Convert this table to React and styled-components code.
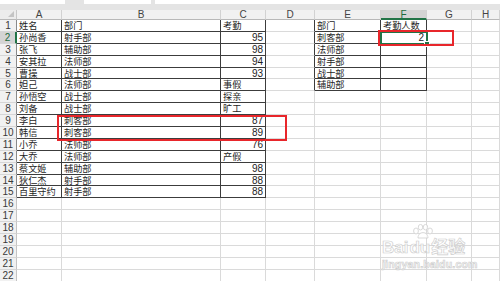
import React from 'react'
import styled, { createGlobalStyle } from 'styled-components'

const Global = createGlobalStyle`
  html, body {
    margin: 0;
    padding: 0;
    background: #fff;
    overflow: hidden;
  }
  body {
    font-family: 'Liberation Sans', 'Noto Sans CJK SC', sans-serif;
  }
`

const Page = styled.div`
  position: relative;
  width: 500px;
  height: 281px;
  overflow: hidden;
  background: #fff;
`

const TopStrip = styled.div`
  height: 10px;
  background: #e4e4e4;
  display: flex;
  align-items: flex-start;
`

const FormulaBox = styled.div`
  height: 4px;
  width: ${p => p.$w}px;
  margin-left: ${p => p.$gap}px;
  background: #fff;
  flex: ${p => (p.$grow ? 1 : 'none')};
`

const Sheet = styled.div`
  display: grid;
  grid-template-columns: 17px 45px 159px 45px 49px 66px 46px 45px 1fr;
  grid-template-rows: 10px repeat(22, 11.9px);
`

const Corner = styled.div`
  background: #ececec;
  border-right: 1px solid #c8c8c8;
  border-bottom: 1px solid #b8b8b8;
  box-sizing: border-box;
  position: relative;

  &:after {
    content: '';
    position: absolute;
    right: 2px;
    bottom: 2px;
    border-left: 6px solid transparent;
    border-bottom: 6px solid #c4c4c4;
  }
`

const ColHead = styled.div`
  box-sizing: border-box;
  background: ${p => (p.$sel ? '#d4d4d4' : '#f1f1f1')};
  border-right: 1px solid #d2d2d2;
  border-bottom: ${p => (p.$sel ? '2px solid #217346' : '1px solid #b8b8b8')};
  color: ${p => (p.$sel ? '#1d6b3c' : '#444')};
  font-size: 10px;
  line-height: 9px;
  text-align: center;
  font-family: 'Liberation Sans', sans-serif;
`

const RowHead = styled.div`
  box-sizing: border-box;
  background: ${p => (p.$sel ? '#d4d4d4' : '#f1f1f1')};
  border-right: ${p => (p.$sel ? '2px solid #217346' : `1px solid ${p.$dark ? '#8a8a8a' : '#c4c4c4'}`)};
  border-bottom: 1px solid #d6d6d6;
  color: ${p => (p.$sel ? '#1d6b3c' : '#3a3a3a')};
  font-size: 10px;
  line-height: 11px;
  text-align: center;
  font-family: 'Liberation Sans', sans-serif;
`

const Cell = styled.div`
  box-sizing: border-box;
  border-right: 1px solid ${p => (p.$darkR ? '#3c3c3c' : '#dadada')};
  border-bottom: 1px solid ${p => (p.$darkB ? '#3c3c3c' : '#dadada')};
  font-family: ${p => (p.$num ? "'Liberation Sans', sans-serif" : "'Noto Sans CJK SC', sans-serif")};
  font-size: ${p => (p.$num ? '10px' : '9.2px')};
  line-height: 11px;
  color: #1e1e1e;
  text-align: ${p => (p.$num ? 'right' : 'left')};
  padding: 0 2px 0 2px;
  white-space: nowrap;
`

const Mark = styled.div`
  position: absolute;
  left: ${p => p.$x}px;
  top: ${p => p.$y}px;
  width: ${p => p.$w}px;
  height: ${p => p.$h}px;
  border: 2px solid #e8262b;
  box-sizing: border-box;
  pointer-events: none;
`

const Active = styled.div`
  position: absolute;
  left: 380px;
  top: 31px;
  width: 48px;
  height: 14px;
  border: 2px solid #217346;
  box-sizing: border-box;

  &:after {
    content: '';
    position: absolute;
    right: -4px;
    bottom: -4px;
    width: 4px;
    height: 4px;
    background: #217346;
    border: 1px solid #fff;
  }
`

const Watermark = styled.div`
  position: absolute;
  left: 382px;
  top: 225px;
  width: 92px;
  display: flex;
  flex-direction: column;
  align-items: flex-start;
  color: rgba(255, 255, 255, 0.85);
  -webkit-text-stroke: 0.7px #cfcfcf;
  font-family: 'Liberation Sans', 'Noto Sans CJK SC', sans-serif;
`

const LogoLine = styled.div`
  display: flex;
  align-items: flex-end;
  font-weight: bold;
  font-size: 17px;
  line-height: 17px;
  margin-top: 14px;
`

const Du = styled.span`
  position: relative;
  margin: 0 1px;
`

const Paw = styled.svg`
  position: absolute;
  left: 1px;
  top: -15px;
`

const Site = styled.div`
  font-size: 10.5px;
  line-height: 12px;
  margin-top: 2px;
  font-weight: bold;
  letter-spacing: 0.2px;
`

const cols = ['A', 'B', 'C', 'D', 'E', 'F', 'G', 'H']

const people = [
  ['姓名', '部门', '考勤'],
  ['孙尚香', '射手部', 95],
  ['张飞', '辅助部', 98],
  ['安其拉', '法师部', 94],
  ['曹操', '战士部', 93],
  ['妲己', '法师部', '事假'],
  ['孙悟空', '战士部', '探亲'],
  ['刘备', '战士部', '旷工'],
  ['李白', '刺客部', 87],
  ['韩信', '刺客部', 89],
  ['小乔', '法师部', 76],
  ['大乔', '法师部', '产假'],
  ['蔡文姬', '辅助部', 98],
  ['狄仁杰', '射手部', 88],
  ['百里守约', '射手部', 88]
]

const summary = [
  ['部门', '考勤人数'],
  ['刺客部', 2],
  ['法师部', ''],
  ['射手部', ''],
  ['战士部', ''],
  ['辅助部', '']
]

const inTable = (r, c) =>
  (r >= 1 && r <= 15 && c >= 0 && c <= 2) || (r >= 1 && r <= 6 && (c === 4 || c === 5))

const valueAt = (r, c) => {
  if (r <= 15 && c <= 2) return people[r - 1][c]
  if (r <= 6 && c === 4) return summary[r - 1][0]
  if (r <= 6 && c === 5) return summary[r - 1][1]
  return ''
}

const PawIcon = () => (
  <Paw width='26' height='15' viewBox='0 0 26 15'>
    <g fill='rgba(255,255,255,0.8)' stroke='#cfcfcf' strokeWidth='0.8'>
      <ellipse cx='6' cy='7' rx='2.4' ry='3' />
      <ellipse cx='10.5' cy='3.2' rx='2.2' ry='2.8' />
      <ellipse cx='15.5' cy='3.2' rx='2.2' ry='2.8' />
      <ellipse cx='20' cy='7' rx='2.4' ry='3' />
      <path d='M8 14 C8 10 11 8.5 13 8.5 C15 8.5 18 10 18 14 Z' />
    </g>
  </Paw>
)

export default function App () {
  const rows = []
  for (let r = 1; r <= 22; r++) rows.push(r)

  return (
    <Page>
      <Global />
      <TopStrip>
        <FormulaBox $w={65} $gap={0} />
        <FormulaBox $w={67} $gap={19} />
        <FormulaBox $gap={4} $grow />
      </TopStrip>
      <Sheet>
        <Corner />
        {cols.map(c => (
          <ColHead key={c} $sel={c === 'F'}>{c}</ColHead>
        ))}
        {rows.map(r => (
          <React.Fragment key={r}>
            <RowHead $sel={r === 2} $dark={r <= 15}>{r}</RowHead>
            {cols.map((_, c) => {
              const v = valueAt(r, c)
              return (
                <Cell
                  key={c}
                  $darkR={inTable(r, c) || inTable(r, c + 1)}
                  $darkB={inTable(r, c) || inTable(r + 1, c)}
                  $num={typeof v === 'number'}
                >
                  {v}
                </Cell>
              )
            })}
          </React.Fragment>
        ))}
      </Sheet>
      <Active />
      <Mark $x={57} $y={115} $w={230} $h={26} />
      <Mark $x={378} $y={30} $w={76} $h={16} />
      <Watermark>
        <LogoLine>
          <span>Bai</span>
          <Du>
            <PawIcon />
            du
          </Du>
          <span>经验</span>
        </LogoLine>
        <Site>jingyan.baidu.com</Site>
      </Watermark>
    </Page>
  )
}
